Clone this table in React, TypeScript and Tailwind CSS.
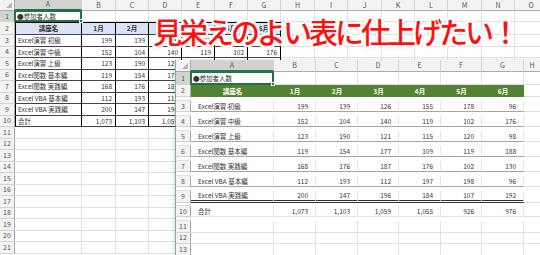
const months = ["1月", "2月", "3月", "4月", "5月", "6月"]

const courses: [string, number[]][] = [
  ["Excel演習 初級", [199, 139, 126, 155, 178, 96]],
  ["Excel演習 中級", [152, 104, 140, 119, 102, 176]],
  ["Excel演習 上級", [123, 190, 121, 115, 120, 98]],
  ["Excel関数 基本編", [119, 154, 177, 109, 119, 188]],
  ["Excel関数 実践編", [168, 176, 187, 176, 102, 130]],
  ["Excel VBA 基本編", [112, 193, 112, 197, 198, 96]],
  ["Excel VBA 実践編", [200, 147, 196, 184, 107, 192]],
]

const totals = ["1,073", "1,103", "1,059", "1,055", "926", "976"]

const backLetters = ["A", "B", "C", "D", "E", "F", "G", "H", "I", "J", "K", "L", "M", "N", "O"]
const frontLetters = ["A", "B", "C", "D", "E", "F", "G", "H"]

const backCols =
  "grid grid-cols-[15px_67px_34px_33px_33px_33px_33px_33px_34px_33px_34px_33px_33px_34px_33px_33px]"
const frontCols = "grid grid-cols-[15px_83px_42px_42px_41px_42px_41px_42px_17px]"

function Selection() {
  return (
    <div className="pointer-events-none absolute -inset-px border-2 border-[#217346]">
      <div className="absolute -bottom-[3px] -right-[3px] h-[4px] w-[4px] border border-white bg-[#217346]" />
    </div>
  )
}

function ColHeader({ letters, cols, h }: { letters: string[]; cols: string; h: string }) {
  return (
    <div className={`${cols} ${h} bg-[#f3f3f3] text-[7px] text-[#555]`}>
      <div className="relative border-b border-r border-[#ababab]">
        <div className="absolute bottom-[2px] right-[2px] h-0 w-0 border-b-[6px] border-l-[6px] border-b-[#b6b6b6] border-l-transparent" />
      </div>
      {letters.map((l, i) => (
        <div
          key={l}
          className={`flex items-center justify-center border-r border-[#d4d4d4] ${
            i === 0 ? "border-b-2 border-b-[#217346] bg-[#d2d2d2] text-[#217346]" : "border-b border-b-[#ababab]"
          }`}
        >
          {l}
        </div>
      ))}
    </div>
  )
}

function RowNum({ n, active }: { n: number; active?: boolean }) {
  return (
    <div
      className={`flex items-center justify-center border-r border-b border-r-[#ababab] border-b-[#d4d4d4] text-[7px] ${
        active ? "bg-[#d2d2d2] text-[#217346]" : "bg-[#f3f3f3] text-[#555]"
      }`}
    >
      {n}
    </div>
  )
}

function Blank({ n }: { n: number }) {
  return (
    <>
      {Array.from({ length: n }).map((_, i) => (
        <div key={i} className="border-b border-r border-[#e1e1e1]" />
      ))}
    </>
  )
}

function BackSheet() {
  const tableCell = "flex items-center border-b border-r border-b-[#444] border-r-black"
  return (
    <div className="absolute left-0 top-0 h-[255px] w-[540px] overflow-hidden bg-white">
      <ColHeader letters={backLetters} cols={backCols} h="h-[11px]" />

      <div className={`${backCols} h-[11px]`}>
        <RowNum n={1} active />
        <div className="relative flex items-center border-b border-r border-[#e1e1e1] pl-[2px]">
          ●参加者人数
          <Selection />
        </div>
        <Blank n={14} />
      </div>

      <div className={`${backCols} h-[13px]`}>
        <RowNum n={2} />
        <div className={`${tableCell} justify-center border-l border-t border-l-black border-t-black bg-[#dae3f3] font-bold`}>
          講座名
        </div>
        {months.map((m) => (
          <div key={m} className={`${tableCell} justify-center border-t border-t-black bg-[#dae3f3] font-bold`}>
            {m}
          </div>
        ))}
        <Blank n={8} />
      </div>

      {courses.map(([name, vals], r) => (
        <div key={name} className={`${backCols} h-[11.5px]`}>
          <RowNum n={r + 3} />
          <div className={`${tableCell} border-l border-l-black pl-[2px]`}>{name}</div>
          {vals.map((v, i) => (
            <div key={i} className={`${tableCell} justify-end pr-[3px]`}>
              {v}
            </div>
          ))}
          <Blank n={8} />
        </div>
      ))}

      <div className={`${backCols} h-[11.5px]`}>
        <RowNum n={10} />
        <div className={`${tableCell} border-l border-l-black pl-[2px]`}>合計</div>
        {totals.map((t, i) => (
          <div key={i} className={`${tableCell} justify-end pr-[3px]`}>
            {t}
          </div>
        ))}
        <Blank n={8} />
      </div>

      {Array.from({ length: 11 }).map((_, i) => (
        <div key={i} className={`${backCols} h-[11.5px]`}>
          <RowNum n={i + 11} />
          <Blank n={15} />
        </div>
      ))}
    </div>
  )
}

function FrontSheet() {
  const dataRow = "border-b border-b-[#a6a6a6]"
  return (
    <div className="absolute left-[175px] top-[60px] h-[195px] w-[365px] overflow-hidden border-l border-[#7bb596] bg-white shadow-[-1px_0_3px_rgba(0,0,0,0.15)]">
      <ColHeader letters={frontLetters} cols={frontCols} h="h-[12px]" />

      <div className={`${frontCols} h-[13px]`}>
        <RowNum n={1} active />
        <div className="relative flex items-center border-b border-r border-[#e1e1e1] pl-[2px]">
          ●参加者人数
          <Selection />
        </div>
        <Blank n={7} />
      </div>

      <div className={`${frontCols} h-[16px]`}>
        <RowNum n={2} />
        <div className="flex items-center justify-center bg-[#548235] font-bold text-white">講座名</div>
        {months.map((m) => (
          <div key={m} className="flex items-center justify-center bg-[#548235] font-bold text-white">
            {m}
          </div>
        ))}
        <Blank n={2} />
      </div>

      {courses.map(([name, vals], r) => (
        <div key={name} className={`${frontCols} h-[15px]`}>
          <RowNum n={r + 3} />
          <div
            className={`flex items-center border-r border-r-[#e6e6e6] pl-[7px] ${
              r === 6 ? "border-b-[3px] border-double border-b-[#333]" : dataRow
            }`}
          >
            {name}
          </div>
          {vals.map((v, i) => (
            <div
              key={i}
              className={`flex items-center justify-end border-r border-r-[#e6e6e6] pr-[7px] ${
                r === 6 ? "border-b-[3px] border-double border-b-[#333]" : dataRow
              }`}
            >
              {v}
            </div>
          ))}
          <Blank n={2} />
        </div>
      ))}

      <div className={`${frontCols} h-[15px]`}>
        <RowNum n={10} />
        <div className="flex items-center border-b border-r border-[#e6e6e6] pl-[7px]">合計</div>
        {totals.map((t, i) => (
          <div key={i} className="flex items-center justify-end border-b border-r border-[#e6e6e6] pr-[7px]">
            {t}
          </div>
        ))}
        <Blank n={2} />
      </div>

      {Array.from({ length: 3 }).map((_, i) => (
        <div key={i} className={`${frontCols} h-[11.5px]`}>
          <RowNum n={i + 11} />
          <Blank n={8} />
        </div>
      ))}
    </div>
  )
}

export default function App() {
  return (
    <div className="relative h-[255px] w-[540px] overflow-hidden bg-white font-['Noto_Sans_CJK_JP',sans-serif] text-[6.5px] leading-none text-[#333]">
      <BackSheet />
      <FrontSheet />
      <div className="absolute left-[153px] top-[17px] whitespace-nowrap text-[29px] font-medium leading-none tracking-[-3px] text-[#ff1010] [text-shadow:2px_0_0_#fff,-2px_0_0_#fff,0_2px_0_#fff,0_-2px_0_#fff,2px_2px_0_#fff,-2px_-2px_0_#fff,2px_-2px_0_#fff,-2px_2px_0_#fff,0_0_4px_rgba(0,0,0,0.35)]">
        見栄えのよい表に仕上げたい！
      </div>
    </div>
  )
}
